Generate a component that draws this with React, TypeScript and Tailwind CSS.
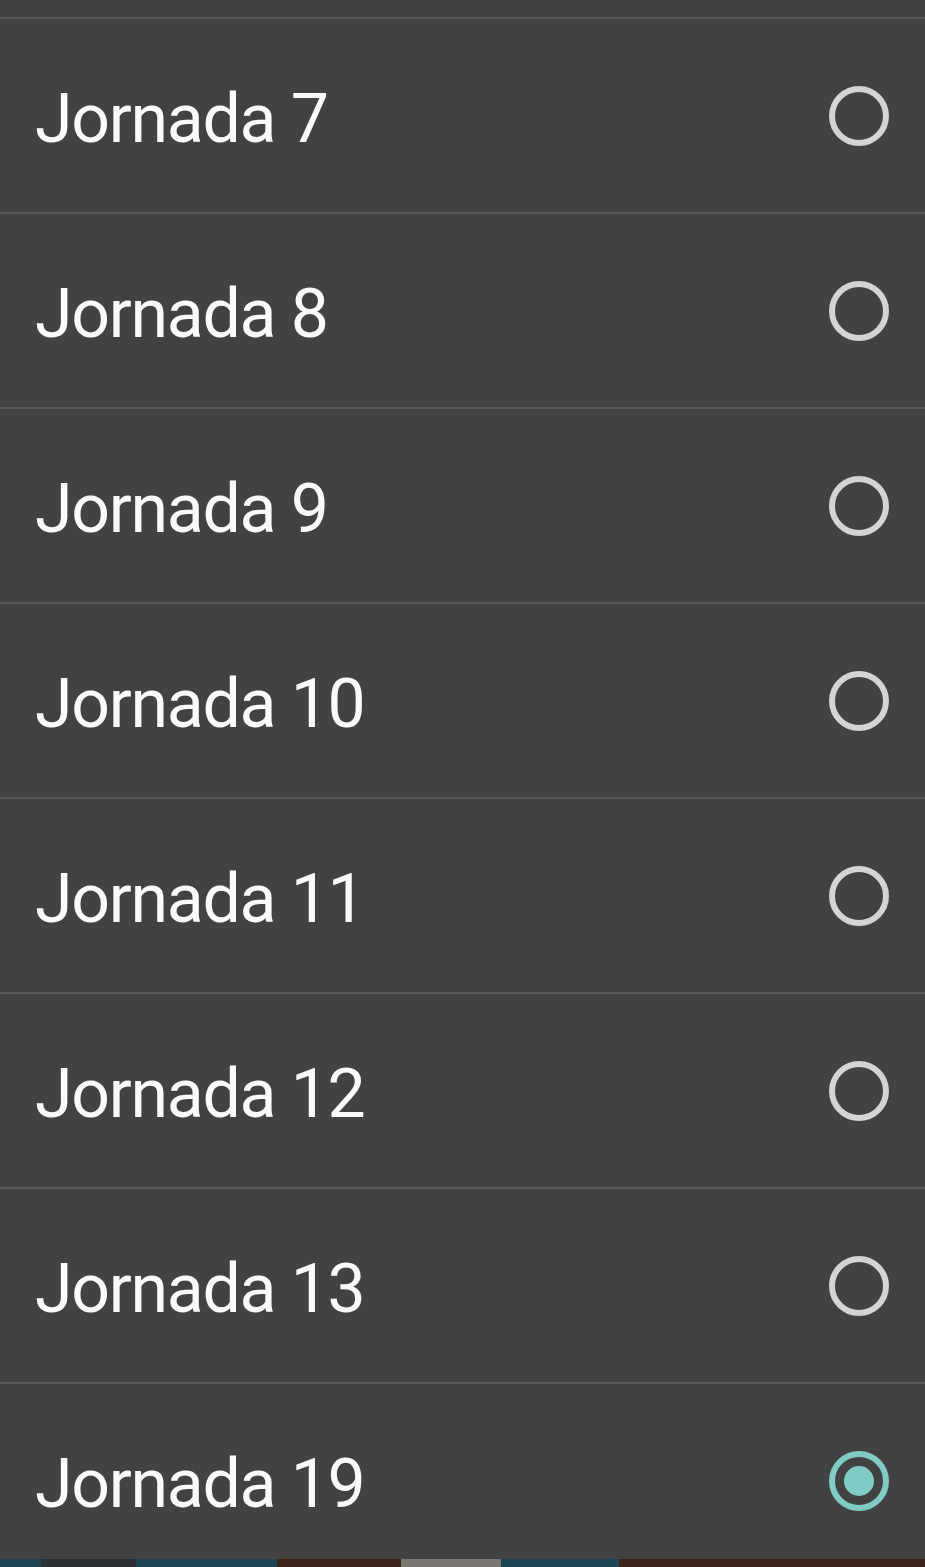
import React from 'react';

const rounds = ['Jornada 7', 'Jornada 8', 'Jornada 9', 'Jornada 10', 'Jornada 11', 'Jornada 12', 'Jornada 13', 'Jornada 19'];

const Radio: React.FC<{ checked: boolean }> = ({ checked }) => (
  <svg width="60" height="60" viewBox="0 0 60 60" className="shrink-0">
    <circle cx="30" cy="30" r="27" fill="none" stroke={checked ? '#80cbc4' : '#d4d4d4'} strokeWidth="6" />
    {checked && <circle cx="30" cy="30" r="15" fill="#80cbc4" />}
  </svg>
);

export default function App() {
  const selected = 'Jornada 19';

  return (
    <div className="w-[925px] h-[1567px] flex flex-col bg-[#424242]" style={{ fontFamily: 'Roboto, "Noto Sans", sans-serif' }}>
      <div className="h-[1559px] overflow-hidden flex flex-col">
        <div className="h-[17px] shrink-0" />
        {rounds.map((r) => (
          <div key={r} className="shrink-0 flex flex-col">
            <div className="h-[2px] bg-[#595959]" />
            <div className="h-[193px] flex items-center justify-between pl-[35px] pr-[36px]">
              <span className="mt-[6px] text-[68px] leading-none text-[#fafafa] tracking-[-1.3px]">{r}</span>
              <Radio checked={r === selected} />
            </div>
          </div>
        ))}
      </div>
      {/* picture behind the dialog peeking out */}
      <div className="h-[8px] flex">
        <div className="w-[41px] bg-[#1d4556]" />
        <div className="w-[95px] bg-[#2a3034]" />
        <div className="w-[141px] bg-[#1d4556]" />
        <div className="w-[124px] bg-[#3a2518]" />
        <div className="w-[100px] bg-[#7a7672]" />
        <div className="w-[118px] bg-[#1d4556]" />
        <div className="flex-1 bg-[#3a2518]" />
      </div>
    </div>
  );
}
